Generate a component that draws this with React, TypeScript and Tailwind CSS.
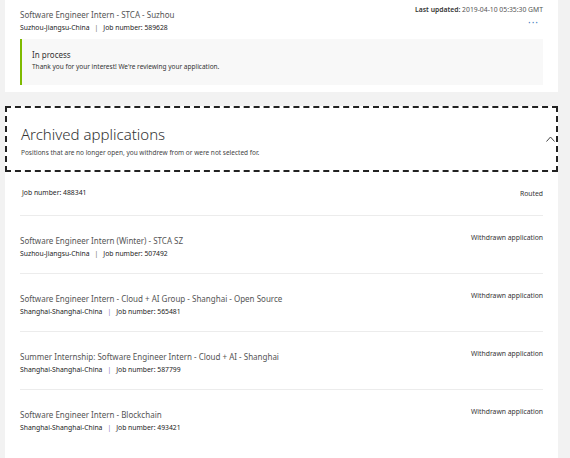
type Job = {
  title?: string;
  location?: string;
  jobNumber: string;
  status: string;
  purple?: boolean;
};

const archived: Job[] = [
  { jobNumber: "488341", status: "Routed" },
  {
    title: "Software Engineer Intern (Winter) - STCA SZ",
    location: "Suzhou-Jiangsu-China",
    jobNumber: "507492",
    status: "Withdrawn application",
  },
  {
    title: "Software Engineer Intern - Cloud + AI Group - Shanghai - Open Source",
    location: "Shanghai-Shanghai-China",
    jobNumber: "565481",
    status: "Withdrawn application",
    purple: true,
  },
  {
    title: "Summer Internship: Software Engineer Intern - Cloud + AI - Shanghai",
    location: "Shanghai-Shanghai-China",
    jobNumber: "587799",
    status: "Withdrawn application",
    purple: true,
  },
  {
    title: "Software Engineer Intern - Blockchain",
    location: "Shanghai-Shanghai-China",
    jobNumber: "493421",
    status: "Withdrawn application",
    purple: true,
  },
];

function MetaLine({ location, jobNumber, purple }: { location?: string; jobNumber: string; purple?: boolean }) {
  return (
    <div className="text-[6.8px] leading-[12px] text-[#222]">
      {location && (
        <>
          {location}
          <span className={`mx-[5px] ${purple ? "text-[#8a6fc4]" : "text-[#666]"}`}>|</span>
        </>
      )}
      Job number: {jobNumber}
    </div>
  );
}

export default function App() {
  return (
    <div
      className="min-h-screen bg-[#f2f2f2] pl-[5px] pr-[12px] text-[#333]"
      style={{ fontFamily: '"Noto Sans", "Open Sans", sans-serif' }}
    >
      {/* Active application */}
      <section className="bg-white px-[15px] pt-[4px] pb-[7px]">
        <div className="flex items-start justify-between">
          <div className="pt-[4px]">
            <div className="text-[8px] leading-[14px] text-[#555]">Software Engineer Intern - STCA - Suzhou</div>
            <MetaLine location="Suzhou-Jiangsu-China" jobNumber="589628" />
          </div>
          <div className="flex flex-col items-end">
            <div className="text-[6.8px] leading-[12px] text-[#555]">
              <span className="font-semibold text-[#333]">Last updated:</span> 2019-04-10 05:35:30 GMT
            </div>
            <div className="mt-[1px] mr-[4px] text-[10px] leading-[10px] tracking-[1px] text-[#4a7fc1]">···</div>
          </div>
        </div>
        <div className="mt-[5px] h-[46px] border-l-2 border-[#7fba00] bg-[#f8f8f8] pl-[10px] pt-[9px]">
          <div className="text-[8px] leading-[13px] text-[#333]">In process</div>
          <div className="text-[6.5px] leading-[11px] text-[#333]">Thank you for your interest! We're reviewing your application.</div>
        </div>
      </section>

      <div className="h-[14px]" />

      {/* Archived header */}
      <section className="flex h-[66px] items-center justify-between border-2 border-dashed border-[#222] bg-white pl-[14px] pr-[1px]">
        <div className="pt-[2px]">
          <h2 className="text-[15px] font-light leading-[22px] text-[#333]">Archived applications</h2>
          <p className="mt-[3px] text-[6.5px] leading-[10px] text-[#444]">
            Positions that are no longer open, you withdrew from or were not selected for.
          </p>
        </div>
        <svg width="9" height="6" viewBox="0 0 9 6">
          <polyline points="0.5,5.5 4.5,1 8.5,5.5" fill="none" stroke="#444" strokeWidth="1" />
        </svg>
      </section>

      {/* Archived list */}
      <section className="bg-white px-[15px] pb-[16px]">
        {archived.map((job, i) => (
          <div
            key={job.jobNumber}
            className={`flex justify-between ${i > 0 ? "border-t border-[#ececec] pt-[18px] pb-[13px]" : "pt-[15px] pb-[15px]"}`}
          >
            <div className={i === 0 ? "pl-[2px]" : ""}>
              {job.title && <div className="text-[8px] leading-[14px] text-[#555]">{job.title}</div>}
              <MetaLine location={job.location} jobNumber={job.jobNumber} purple={job.purple} />
            </div>
            <div className={`text-[6.8px] leading-[12px] text-[#333] ${i === 0 ? "pt-[1px]" : "-mt-[2px]"}`}>
              {job.status}
            </div>
          </div>
        ))}
      </section>
      <div className="h-[7px]" />
      <div className="h-[4px] bg-white" />
    </div>
  );
}
